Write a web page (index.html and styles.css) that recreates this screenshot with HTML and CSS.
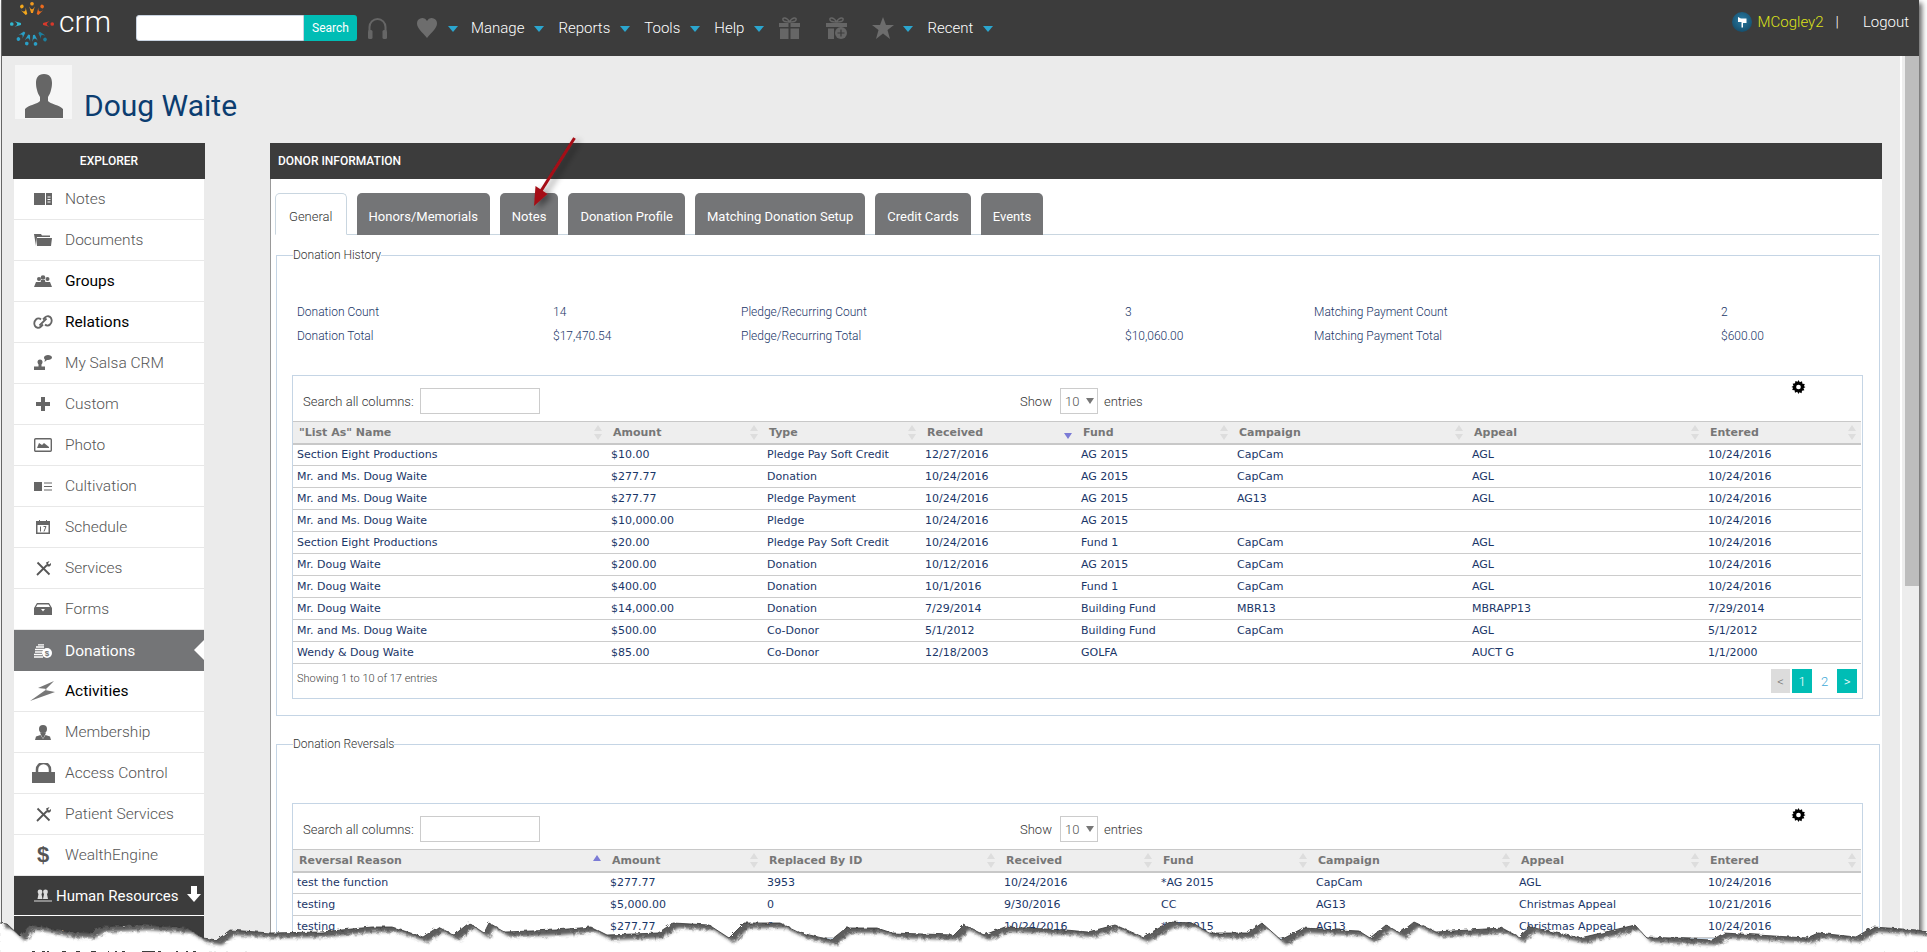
FILE: index.html
```html
<!DOCTYPE html>
<html lang="en">
<head>
<meta charset="utf-8">
<title>Doug Waite - CRM</title>
<link rel="stylesheet" href="styles.css">
</head>
<body>
<div class="window">
  <header class="topbar">
    <div class="logo">
      <svg class="logo-ring" viewBox="-25 -25 50 50" width="50" height="46">
        <g fill="#f5a81c"><g transform="rotate(-30)"><circle cx="0" cy="-22" r="2"/><path d="M-3-19Q0-13 3-19L1-12H-1Z"/></g></g>
        <g fill="#f29a1f"><g transform="rotate(0)"><circle cx="0" cy="-22" r="2"/><path d="M-3-19Q0-13 3-19L1-12H-1Z"/></g></g>
        <g fill="#ea6a1e"><g transform="rotate(30)"><circle cx="0" cy="-22" r="2"/><path d="M-3-19Q0-13 3-19L1-12H-1Z"/></g></g>
        <g fill="#d8392b"><g transform="rotate(90)"><circle cx="0" cy="-22" r="2"/><path d="M-3-19Q0-13 3-19L1-12H-1Z"/></g></g>
        <g fill="#1c7f9e"><g transform="rotate(140)"><circle cx="0" cy="-22" r="2"/><path d="M-3-19Q0-13 3-19L1-12H-1Z"/></g></g>
        <g fill="#2a9fc6"><g transform="rotate(170)"><circle cx="0" cy="-22" r="2"/><path d="M-3-19Q0-13 3-19L1-12H-1Z"/></g></g>
        <g fill="#2a9fc6"><g transform="rotate(195)"><circle cx="0" cy="-22" r="2"/><path d="M-3-19Q0-13 3-19L1-12H-1Z"/></g></g>
        <g fill="#2a9fc6"><g transform="rotate(222)"><circle cx="0" cy="-22" r="2"/><path d="M-3-19Q0-13 3-19L1-12H-1Z"/></g></g>
        <g fill="#33b8d0"><g transform="rotate(270)"><circle cx="0" cy="-22" r="2"/><path d="M-3-19Q0-13 3-19L1-12H-1Z"/></g></g>
      </svg>
      <span class="logo-text">crm</span>
    </div>
    <form class="search">
      <input class="search-input" type="text">
      <button class="search-btn" type="button">Search</button>
    </form>
    <svg class="tb-icon headset" viewBox="0 0 21 24" width="21" height="24"><path d="M2.5 15V11a8 8 0 0 1 16 0v4" fill="none" stroke="#666" stroke-width="2"/><rect x="1" y="14" width="4.5" height="9" rx="1.5" fill="#666"/><rect x="15.5" y="14" width="4.5" height="9" rx="1.5" fill="#666"/></svg>
    <svg class="tb-icon heart" viewBox="0 0 20 20" width="20" height="20"><path d="M10 20C5 14 0 10 0 5.500A5.300 5.300 0 0 1 10 3a5.300 5.300 0 0 1 10 2.500C20 10 15 14 10 20Z" fill="#6d6d6d"/></svg>
    <span class="caret first"></span>
    <a class="nav-link">Manage</a><span class="caret"></span>
    <a class="nav-link">Reports</a><span class="caret"></span>
    <a class="nav-link">Tools</a><span class="caret"></span>
    <a class="nav-link">Help</a><span class="caret"></span>
    <svg class="tb-icon gift" viewBox="0 0 21 22" width="21" height="22"><path d="M10.500 5C8 0 3 0 4 3c.5 1.500 3.500 2 6.500 2Zm0 0C13 0 18 0 17 3c-.5 1.500-3.500 2-6.500 2Z" fill="none" stroke="#666" stroke-width="1.500"/><path d="M0 6h9.500v4H0zM11.500 6H21v4h-9.500zM1 11.500h8.500V22H1zM11.500 11.500H20V22h-8.500z" fill="#666"/></svg>
    <svg class="tb-icon gift2" viewBox="0 0 21 22" width="21" height="22"><path d="M10.500 5C8 0 3 0 4 3c.5 1.500 3.500 2 6.500 2Zm0 0C13 0 18 0 17 3c-.5 1.500-3.500 2-6.500 2Z" fill="none" stroke="#666" stroke-width="1.500"/><path d="M0 6h21v4H0zM2 11.500h6V22H2z" fill="#666"/><circle cx="15" cy="16" r="6" fill="#666"/><path d="M15 12.500v7M11.500 16h7" stroke="#3c3c3c" stroke-width="1.200"/></svg>
    <svg class="tb-icon star" viewBox="0 0 22 22" width="22" height="22"><path d="M11 0l3 8h8l-6.500 5 2.500 9-7-5.500L4 22l2.500-9L0 8h8Z" fill="#6d6d6d"/></svg>
    <span class="caret first-star"></span>
    <a class="nav-link">Recent</a><span class="caret"></span>
    <div class="userbox">
      <svg class="user-badge" viewBox="0 0 20 20" width="20" height="20"><defs><radialGradient id="badge" cx=".5" cy=".4" r=".7"><stop offset="0" stop-color="#2a7ba3"/><stop offset="1" stop-color="#124763"/></radialGradient></defs><circle cx="10" cy="10" r="10" fill="url(#badge)"/><path d="M6 5l3 1.500h5.500V11H11v4.500H9.500V10H6Z" fill="#fff"/></svg>
      <a class="user-name">MCogley2</a>
      <span class="user-sep">|</span>
      <a class="logout">Logout</a>
    </div>
  </header>

  <div class="workspace">
    <div class="page">
      <div class="person">
        <div class="person-photo">
          <svg viewBox="0 0 38 44" width="38" height="44"><path d="M19 0c-6 0-8 4-8 9 0 3 .5 5 1 7 .5 3 2 5 3 7v4c-2 3-12 4-15 8v9h38v-9c-3-4-13-5-15-8v-4c1-2 2.500-4 3-7 .5-2 1-4 1-7 0-5-2-9-8-9Z" fill="#666"/></svg>
        </div>
        <h1 class="person-name">Doug Waite</h1>
      </div>
      <div class="columns">
        <aside class="explorer">
          <div class="explorer-head">EXPLORER</div>
          <ul class="explorer-list">
            <li class="ex-item"><span class="ex-icon"><svg viewBox="0 0 18 12" width="18" height="12"><path d="M0 0h11v12H0zM12 0h6v12h-6z" fill="#666"/><path d="M13.500 4h3M13.500 6.500h3M13.500 9h3" stroke="#fff"/></svg></span>Notes</li>
            <li class="ex-item"><span class="ex-icon"><svg viewBox="0 0 18 12" width="18" height="12"><path d="M0 0h7l1 1.500h8V3H3L2 12Z" fill="#666"/><path d="M3 4h15l-1 8H3Z" fill="#666"/></svg></span>Documents</li>
            <li class="ex-item on"><span class="ex-icon"><svg viewBox="0 0 18 12" width="18" height="12"><g fill="#666"><circle cx="5" cy="4" r="2"/><circle cx="9" cy="2.500" r="2.300"/><circle cx="13.500" cy="4" r="2"/><path d="M0 12l2-5h5l-1 5ZM6 12l1-7h4l1 7ZM12 12l-1-5h5l2 5Z"/></g></svg></span>Groups</li>
            <li class="ex-item on"><span class="ex-icon"><svg viewBox="0 0 20 14" width="20" height="14"><g fill="none" stroke="#666" stroke-width="1.800"><path d="M8 4.500a3.500 3.500 0 0 0-5 0C1 6.500 1 9 2 11s4 2.500 6 .5l2-2"/><path d="M12 9.500a3.500 3.500 0 0 0 5 0c2-2 2-4.500 1-6.500s-4-2.500-6-.5l-2 2"/><path d="M6.500 10.500l7-7"/></g></svg></span>Relations</li>
            <li class="ex-item"><span class="ex-icon"><svg viewBox="0 0 18 16" width="18" height="16"><g fill="#666"><circle cx="6" cy="7" r="2.500"/><path d="M4.500 9h3v2.500H11V15H0v-3.500h4.500Z"/><path d="M10 2.500C10 1 12 0 14 0s4 1 4 2.500S16 5 14 5h-1L10.500 7l.5-2.500c-.7-.4-1-1.200-1-2Z"/></g></svg></span>My Salsa CRM</li>
            <li class="ex-item"><span class="ex-icon"><svg viewBox="0 0 14 14" width="14" height="14"><path d="M5 0h4v5h5v4H9v5H5V9H0V5h5Z" fill="#666"/></svg></span>Custom</li>
            <li class="ex-item"><span class="ex-icon"><svg viewBox="0 0 18 14" width="18" height="14"><rect x=".7" y=".7" width="16.600" height="12.600" rx="1" fill="#fff" stroke="#666" stroke-width="1.400"/><path d="M3 10l2-5 3 2 2-2 5 4v1Z" fill="#666"/></svg></span>Photo</li>
            <li class="ex-item"><span class="ex-icon"><svg viewBox="0 0 18 9" width="18" height="9"><path d="M0 0h8v9H0z" fill="#666"/><path d="M10 1h8M10 4.500h8M10 8h8" stroke="#666"/></svg></span>Cultivation</li>
            <li class="ex-item"><span class="ex-icon"><svg viewBox="0 0 14 14" width="14" height="14"><path d="M0 1h3V0h1v1h6V0h1v1h3v13H0Z" fill="#666"/><rect x="1.500" y="5" width="11" height="7.500" fill="#fff"/><path d="M4.500 6.500v5M7.500 6.500h2.500L8 11.500" fill="none" stroke="#666"/></svg></span>Schedule</li>
            <li class="ex-item"><span class="ex-icon"><svg viewBox="0 0 15 15" width="15" height="15"><g fill="none" stroke="#555" stroke-width="1.800"><path d="M1.500 1.500l12 12"/><path d="M1 14L11 4"/></g><path d="M10 1.500L13.500 0 12 2.500l1 1L15 2c.3 2-1 4-3.500 3.500Z" fill="#555"/></svg></span>Services</li>
            <li class="ex-item"><span class="ex-icon"><svg viewBox="0 0 18 12" width="18" height="12"><path d="M3 0h12l3 5v7H0V5Z" fill="#666"/><path d="M3.500 1.500h11L16 4H2Z" fill="#fff"/><path d="M7 6h4L9 8.500Z" fill="#fff"/></svg></span>Forms</li>
            <li class="ex-item active"><span class="ex-icon"><svg viewBox="0 0 18 14" width="18" height="14"><path d="M0 13h9M0 10.500h8M1 8h8M1 5.500h9M2 3h8M4 .8h6" stroke="#fff" stroke-width="1.300"/><circle cx="13" cy="9" r="5" fill="#fff"/><text x="13" y="12" class="dollar">$</text></svg></span>Donations</li>
            <li class="ex-item on"><span class="ex-icon"><svg viewBox="0 0 26 20" width="26" height="20"><path d="M24 0L8 7l9 1L0 20l25-9-10-2Z" fill="#777"/></svg></span>Activities</li>
            <li class="ex-item"><span class="ex-icon"><svg viewBox="0 0 16 15" width="16" height="15"><circle cx="8" cy="4" r="4" fill="#666"/><path d="M5 7.500h6L10 10l-2 3.500L6 10ZM0 15l1-3.500L5.500 10 8 14l2.500-4 4.500 1.500 1 3.500Z" fill="#666"/></svg></span>Membership</li>
            <li class="ex-item"><span class="ex-icon"><svg viewBox="0 0 23 20" width="23" height="20"><path d="M5 9V6.500a6.500 6.500 0 0 1 13 0V9" fill="none" stroke="#666" stroke-width="2.500"/><rect y="9" width="23" height="11" fill="#666"/></svg></span>Access Control</li>
            <li class="ex-item"><span class="ex-icon"><svg viewBox="0 0 15 15" width="15" height="15"><g fill="none" stroke="#555" stroke-width="1.800"><path d="M1.500 1.500l12 12"/><path d="M1 14L11 4"/></g><path d="M10 1.500L13.500 0 12 2.500l1 1L15 2c.3 2-1 4-3.500 3.500Z" fill="#555"/></svg></span>Patient Services</li>
            <li class="ex-item"><span class="ex-icon ex-dollar">$</span>WealthEngine</li>
            <li class="ex-item dark"><span class="ex-icon-sm"><svg viewBox="0 0 18 13" width="18" height="13"><g fill="#ddd"><circle cx="6" cy="3" r="2.400"/><circle cx="11.500" cy="3" r="2.400"/><path d="M3.500 10l1-5h3l1 5ZM9 10l1-5h3l1 5Z"/><path d="M0 11.500h18v1H0z"/></g></svg></span>Human Resources<svg class="ex-down" viewBox="0 0 14 16" width="14" height="16"><path d="M4 0h6v8h4l-7 8-7-8h4Z" fill="#fff"/></svg></li>
            <li class="ex-item dark"><span class="ex-icon-sm"><svg viewBox="0 0 18 13" width="18" height="13"><rect x="1" width="16" height="10" rx="1" fill="#777"/><path d="M6 12h6" stroke="#777" stroke-width="2"/></svg></span>Reports<svg class="ex-down" viewBox="0 0 14 16" width="14" height="16"><path d="M4 0h6v8h4l-7 8-7-8h4Z" fill="#fff"/></svg></li>
          </ul>
        </aside>

        <section class="panel">
          <div class="panel-head">DONOR INFORMATION</div>
          <div class="panel-body">
            <nav class="tabs">
              <a class="tab current">General</a>
              <a class="tab">Honors/Memorials</a>
              <a class="tab">Notes</a>
              <a class="tab">Donation Profile</a>
              <a class="tab">Matching Donation Setup</a>
              <a class="tab">Credit Cards</a>
              <a class="tab">Events</a>
            </nav>

            <fieldset class="group first-group">
              <legend class="group-title">Donation History</legend>
              <div class="summary">
                <span>Donation Count</span><span>14</span><span>Pledge/Recurring Count</span><span>3</span><span>Matching Payment Count</span><span>2</span>
                <span>Donation Total</span><span>$17,470.54</span><span>Pledge/Recurring Total</span><span>$10,060.00</span><span>Matching Payment Total</span><span>$600.00</span>
              </div>
              <div class="dt">
                <div class="dt-tools">
                  <label class="dt-search">Search all columns:<input class="dt-input" type="text"></label>
                  <div class="dt-length">Show<span class="dt-select">10<i class="dt-select-arrow"></i></span>entries</div>
                  <svg class="dt-gear" viewBox="0 0 16 16" width="15" height="14"><path d="M8 0l1.500 2.500 2.500-1 .5 2.700 2.700.5-1 2.500L16 8l-2.300 1.300 1 2.500-2.700.5-.5 2.700-2.500-1L8 16l-1.500-2.500-2.500 1-.5-2.700-2.700-.5 1-2.500L0 8l2.300-1.300-1-2.500 2.700-.5.500-2.700 2.500 1Z" fill="#000"/><circle cx="8" cy="8" r="2.700" fill="#fff"/></svg>
                </div>
                <table class="dt-table hist">
                  <colgroup><col class="c1"><col class="c2"><col class="c3"><col class="c4"><col class="c5"><col class="c6"><col class="c7"><col class="c8"></colgroup>
                  <thead><tr>
                    <th>"List As" Name<i class="sort"></i></th><th>Amount<i class="sort"></i></th><th>Type<i class="sort"></i></th><th>Received<i class="sort-desc"></i></th><th>Fund<i class="sort"></i></th><th>Campaign<i class="sort"></i></th><th>Appeal<i class="sort"></i></th><th>Entered<i class="sort"></i></th>
                  </tr></thead>
                  <tbody>
                    <tr><td>Section Eight Productions</td><td>$10.00</td><td>Pledge Pay Soft Credit</td><td>12/27/2016</td><td>AG 2015</td><td>CapCam</td><td>AGL</td><td>10/24/2016</td></tr>
                    <tr><td>Mr. and Ms. Doug Waite</td><td>$277.77</td><td>Donation</td><td>10/24/2016</td><td>AG 2015</td><td>CapCam</td><td>AGL</td><td>10/24/2016</td></tr>
                    <tr><td>Mr. and Ms. Doug Waite</td><td>$277.77</td><td>Pledge Payment</td><td>10/24/2016</td><td>AG 2015</td><td>AG13</td><td>AGL</td><td>10/24/2016</td></tr>
                    <tr><td>Mr. and Ms. Doug Waite</td><td>$10,000.00</td><td>Pledge</td><td>10/24/2016</td><td>AG 2015</td><td></td><td></td><td>10/24/2016</td></tr>
                    <tr><td>Section Eight Productions</td><td>$20.00</td><td>Pledge Pay Soft Credit</td><td>10/24/2016</td><td>Fund 1</td><td>CapCam</td><td>AGL</td><td>10/24/2016</td></tr>
                    <tr><td>Mr. Doug Waite</td><td>$200.00</td><td>Donation</td><td>10/12/2016</td><td>AG 2015</td><td>CapCam</td><td>AGL</td><td>10/24/2016</td></tr>
                    <tr><td>Mr. Doug Waite</td><td>$400.00</td><td>Donation</td><td>10/1/2016</td><td>Fund 1</td><td>CapCam</td><td>AGL</td><td>10/24/2016</td></tr>
                    <tr><td>Mr. Doug Waite</td><td>$14,000.00</td><td>Donation</td><td>7/29/2014</td><td>Building Fund</td><td>MBR13</td><td>MBRAPP13</td><td>7/29/2014</td></tr>
                    <tr><td>Mr. and Ms. Doug Waite</td><td>$500.00</td><td>Co-Donor</td><td>5/1/2012</td><td>Building Fund</td><td>CapCam</td><td>AGL</td><td>5/1/2012</td></tr>
                    <tr><td>Wendy &amp; Doug Waite</td><td>$85.00</td><td>Co-Donor</td><td>12/18/2003</td><td>GOLFA</td><td></td><td>AUCT G</td><td>1/1/2000</td></tr>
                  </tbody>
                </table>
                <div class="dt-foot">
                  <span class="dt-info">Showing 1 to 10 of 17 entries</span>
                  <div class="pager"><a class="pg off">&lt;</a><a class="pg cur">1</a><a class="pg plain">2</a><a class="pg cur">&gt;</a></div>
                </div>
              </div>
            </fieldset>

            <fieldset class="group second-group">
              <legend class="group-title">Donation Reversals</legend>
              <div class="dt">
                <div class="dt-tools">
                  <label class="dt-search">Search all columns:<input class="dt-input" type="text"></label>
                  <div class="dt-length">Show<span class="dt-select">10<i class="dt-select-arrow"></i></span>entries</div>
                  <svg class="dt-gear" viewBox="0 0 16 16" width="15" height="14"><path d="M8 0l1.500 2.500 2.500-1 .5 2.700 2.700.5-1 2.500L16 8l-2.300 1.300 1 2.500-2.700.5-.5 2.700-2.500-1L8 16l-1.500-2.500-2.500 1-.5-2.700-2.700-.5 1-2.500L0 8l2.300-1.300-1-2.500 2.700-.5.500-2.700 2.500 1Z" fill="#000"/><circle cx="8" cy="8" r="2.700" fill="#fff"/></svg>
                </div>
                <table class="dt-table rev">
                  <colgroup><col class="c1"><col class="c2"><col class="c3"><col class="c4"><col class="c5"><col class="c6"><col class="c7"><col class="c8"></colgroup>
                  <thead><tr>
                    <th>Reversal Reason<i class="sort-asc"></i></th><th>Amount<i class="sort"></i></th><th>Replaced By ID<i class="sort"></i></th><th>Received<i class="sort"></i></th><th>Fund<i class="sort"></i></th><th>Campaign<i class="sort"></i></th><th>Appeal<i class="sort"></i></th><th>Entered<i class="sort"></i></th>
                  </tr></thead>
                  <tbody>
                    <tr><td>test the function</td><td>$277.77</td><td>3953</td><td>10/24/2016</td><td>*AG 2015</td><td>CapCam</td><td>AGL</td><td>10/24/2016</td></tr>
                    <tr><td>testing</td><td>$5,000.00</td><td>0</td><td>9/30/2016</td><td>CC</td><td>AG13</td><td>Christmas Appeal</td><td>10/21/2016</td></tr>
                    <tr><td>testing</td><td>$277.77</td><td>0</td><td>10/24/2016</td><td>*AG 2015</td><td>AG13</td><td>Christmas Appeal</td><td>10/24/2016</td></tr>
                  </tbody>
                </table>
              </div>
            </fieldset>
          </div>
        </section>
      </div>
    </div>
    <div class="scrollbar"><div class="scroll-thumb"></div></div>
  </div>
</div>

<svg class="callout" viewBox="0 0 1927 952" width="1927" height="952">
  <defs><filter id="arrowShadow" x="-50%" y="-50%" width="200%" height="200%"><feDropShadow dx="4" dy="3" stdDeviation="3" flood-color="#000" flood-opacity=".45"/></filter></defs>
  <g filter="url(#arrowShadow)"><path d="M574.500 138L541 191" stroke="#a50f17" stroke-width="3" fill="none"/><path d="M534 206l1.500-20 12 8Z" fill="#a50f17"/></g>
</svg>

<svg class="torn" viewBox="0 900 1927 52" width="1927" height="52">
  <defs>
    <path id="edge" d="M0 923L7 924L20 936L30 925L44 927L67 932L90 933L100 927L143 925L187 928L203 938L217 940L230 930L270 933L321 932L372 927L392 927L423 937L438 927L454 935L469 923L484 933L489 923L505 932L556 930L591 927L607 935L658 933L673 923L709 925L729 938L744 923L780 923L801 933L831 940L846 928L877 928L892 933L954 935L964 925L984 935L1005 927L1066 930L1088 932L1115 925L1143 937L1170 922L1193 923L1209 933L1248 933L1262 923L1281 940L1303 928L1359 931L1370 938L1386 925L1400 933L1414 922L1436 932L1502 928L1519 937L1530 927L1580 938L1635 925L1646 937L1712 940L1724 933L1807 938L1818 933L1856 937L1873 927L1917 930L1927 932"/>
    <clipPath id="below"><path d="M0 923L7 924L20 936L30 925L44 927L67 932L90 933L100 927L143 925L187 928L203 938L217 940L230 930L270 933L321 932L372 927L392 927L423 937L438 927L454 935L469 923L484 933L489 923L505 932L556 930L591 927L607 935L658 933L673 923L709 925L729 938L744 923L780 923L801 933L831 940L846 928L877 928L892 933L954 935L964 925L984 935L1005 927L1066 930L1088 932L1115 925L1143 937L1170 922L1193 923L1209 933L1248 933L1262 923L1281 940L1303 928L1359 931L1370 938L1386 925L1400 933L1414 922L1436 932L1502 928L1519 937L1530 927L1580 938L1635 925L1646 937L1712 940L1724 933L1807 938L1818 933L1856 937L1873 927L1917 930L1927 932V952H0Z"/></clipPath>
    <filter id="rough" x="0" y="0" width="100%" height="100%"><feTurbulence type="fractalNoise" baseFrequency=".22" numOctaves="2" seed="4"/><feDisplacementMap in="SourceGraphic" scale="4"/></filter>
    <filter id="soft" x="-2%" y="-60%" width="104%" height="220%"><feGaussianBlur stdDeviation="1.800"/></filter>
  </defs>
  <g filter="url(#rough)">
    <rect class="torn-paper" x="0" y="900" width="1927" height="52" clip-path="url(#below)"/>
    <g clip-path="url(#below)">
      <g filter="url(#soft)">
        <path class="torn-shadow" d="M0 923L7 924L20 936L30 925L44 927L67 932L90 933L100 927L143 925L187 928L203 938L217 940L230 930L270 933L321 932L372 927L392 927L423 937L438 927L454 935L469 923L484 933L489 923L505 932L556 930L591 927L607 935L658 933L673 923L709 925L729 938L744 923L780 923L801 933L831 940L846 928L877 928L892 933L954 935L964 925L984 935L1005 927L1066 930L1088 932L1115 925L1143 937L1170 922L1193 923L1209 933L1248 933L1262 923L1281 940L1303 928L1359 931L1370 938L1386 925L1400 933L1414 922L1436 932L1502 928L1519 937L1530 927L1580 938L1635 925L1646 937L1712 940L1724 933L1807 938L1818 933L1856 937L1873 927L1917 930L1927 932V900H0Z" transform="translate(5 5)"/>
      </g>
    </g>
    <use href="#edge" class="torn-line"/>
  </g>
</svg>
</body>
</html>
```
FILE: styles.css
```css
* { box-sizing: border-box; }
html, body { margin: 0; padding: 0; height: 952px; overflow: hidden; background: #fff; }
body { position: relative; font-family: Roboto, "Liberation Sans", sans-serif; }

.window {
  width: 1918px; height: 1100px; margin-left: 1px;
  border-left: 1px solid #666;
  box-shadow: 3px 3px 5px rgba(0,0,0,.6);
  background: #ebebeb;
}

/* top bar */
.topbar { display: flex; align-items: center; height: 56px; background: #3c3c3c; color: #fff; }
.logo { display: flex; width: 134px; align-self: flex-start; flex: none; }
.logo-ring { margin: 1px 0 0 5px; flex: none; }
.logo-text { font-size: 30px; font-weight: 300; line-height: 44px; margin-left: 2px; }
.search { display: flex; height: 26px; margin-top: 0; }
.search-input { width: 168px; height: 26px; border: 1px solid #c9d3e0; border-radius: 3px 0 0 3px; background: #fff; padding: 0; }
.search-btn { width: 53px; height: 26px; border: 0; border-radius: 0 3px 3px 0; background: #00bdb5; color: #fff; font: 400 12px Roboto, sans-serif; padding: 0; }
.tb-icon { flex: none; }
.headset { margin-left: 10px; }
.heart { margin-left: 29px; }
.caret { flex: none; width: 0; height: 0; margin: 2px 14px 0 10px; border: 5px solid transparent; border-top: 6px solid #2ba6cf; border-bottom: 0; }
.caret.first { margin-left: 11px; margin-right: 13px; }
.nav-link { font-size: 15px; font-weight: 300; color: #fff; }
.gift { margin-left: 1px; }
.gift2 { margin-left: 26px; }
.star { margin-left: 25px; }
.caret.first-star { margin-left: 9px; margin-right: 14px; }
.userbox { display: flex; align-items: center; margin-left: auto; align-self: flex-start; padding: 12px 10px 0 0; font-size: 15px; font-weight: 300; }
.user-name { color: #dde21a; margin-left: 6px; }
.user-sep { margin-left: 12px; margin-right: 24px; }
.logout { color: #fff; }

/* work area */
.workspace { display: flex; }
.page { width: 1898px; flex: none; padding: 9px 0 0 11px; }
.scrollbar { flex: none; width: 19px; height: 1000px; padding-left: 5px; background: linear-gradient(90deg, #fff 0, #fff 2px, #ededed 2px); }
.scroll-thumb { width: 14px; height: 530px; background: #bdbdbd; }

.person { display: flex; align-items: flex-end; height: 54px; margin-left: 2px; }
.person-photo { display: flex; justify-content: center; align-items: flex-start; width: 57px; height: 54px; padding-top: 9px; background: #f6f6f6; }
.person-name { margin: 0 0 -5px 12px; font-size: 30px; line-height: 36px; font-weight: 400; color: #0c3d70; white-space: nowrap; }

.columns { display: flex; align-items: flex-start; margin-top: 24px; }

/* explorer */
.explorer { width: 192px; flex: none; }
.explorer-head { height: 36px; line-height: 36px; text-align: center; background: #3c3c3c; color: #fff; font-size: 12px; font-weight: 500; }
.explorer-list { list-style: none; margin: 0 1px; padding: 0; background: #fff; }
.ex-item { position: relative; display: flex; align-items: center; height: 41px; padding-left: 15px; border-bottom: 1px solid #e8e8e8; font-size: 15.500px; font-weight: 300; color: #555; }
.ex-item.on { color: #000; font-weight: 400; }
.ex-icon { display: flex; justify-content: center; align-items: center; width: 28px; margin-right: 8px; flex: none; }
.ex-dollar { font-size: 22px; font-weight: 700; color: #555; font-family: "Liberation Sans", sans-serif; }
.ex-item.active { background: #747577; color: #fff; font-weight: 400; border-bottom: 0; }
.ex-item.active::after { content: ""; position: absolute; right: 0; top: 10px; border: 10px solid transparent; border-right-color: #fff; border-left: 0; }
.dollar { font: 700 8px "Liberation Sans", sans-serif; fill: #747577; text-anchor: middle; }
.ex-item.dark { background: #3c3c3c; color: #fff; font-weight: 400; font-size: 15px; border-bottom: 1px solid #fff; height: 40px; padding-left: 20px; }
.ex-icon-sm { display: flex; width: 18px; margin-right: 4px; flex: none; }
.ex-down { margin-left: 8px; flex: none; margin-top: -4px; }

/* panel */
.panel { width: 1612px; flex: none; margin-left: 65px; background: #fff; }
.panel-head { height: 36px; line-height: 36px; padding-left: 8px; background: #3c3c3c; color: #fff; font-size: 12px; font-weight: 500; }
.panel-body { padding: 14px 3px 0 4px; border-left: 1px solid #999; }
.tabs { display: flex; gap: 10px; height: 42px; border-bottom: 1px solid #c9d6e0; font-size: 13px; font-weight: 300; }
.tab { display: flex; align-items: center; height: 42px; padding: 5px 12px 0; border-radius: 5px 5px 0 0; background: #747577; color: #fff; font-weight: 400; }
.tab.current { background: #fff; color: #333; border: 1px solid #c9d6e0; border-bottom-color: #fff; font-weight: 300; padding: 5px 13px 0; }

.group { margin: 13px 0 0 1px; padding: 0 16px 16px 15px; width: 1604px; border: 1px solid #c5d5e5; min-width: 0; }
.second-group { margin-top: 21px; }
.group-title { margin-left: 1px; padding: 0; font-size: 12px; line-height: 14px; font-weight: 300; color: #333; }
.summary { display: grid; grid-template-columns: 256px 188px 384px 189px 407px 1fr; grid-auto-rows: 24px; align-items: center; margin-top: 38px; padding-left: 5px; font-size: 12px; font-weight: 300; color: #1a3668; }

/* data tables */
.dt { margin-top: 27px; border: 1px solid #c5d5e5; background: #fff; }
.second-group .dt { margin-top: 52px; }
.dt-tools { display: flex; align-items: center; height: 45px; padding-top: 12px; padding-bottom: 7px; font-size: 13px; font-weight: 300; color: #333; }
.dt-search { display: flex; align-items: center; width: 727px; padding-left: 10px; }
.dt-input { width: 120px; height: 26px; margin-left: 6px; border: 1px solid #ccc; background: #fff; padding: 0; }
.dt-length { display: flex; align-items: center; width: 124px; }
.dt-select { display: flex; align-items: center; justify-content: space-between; width: 38px; height: 26px; margin: 0 6px 0 8px; padding: 0 3px 0 4px; border: 1px solid #ccc; color: #555; }
.dt-select-arrow { width: 0; height: 0; border: 4px solid transparent; border-top: 6px solid #777; border-bottom: 0; }
.dt-gear { align-self: flex-start; margin: -8px 56px 0 auto; }

.dt-table { width: 1568px; table-layout: fixed; border-collapse: collapse; font-family: "DejaVu Sans", sans-serif; font-size: 11px; }
.dt-table th { position: relative; height: 22px; padding: 0 6px; text-align: left; background: #eee; color: #777; font-weight: 700; border-top: 1px solid #c8c8c8; border-bottom: 2px solid #c8c8c8; white-space: nowrap; }
.dt-table td { height: 22px; padding: 0 4px; color: #1a3668; border-bottom: 1px solid #ccc; white-space: nowrap; }
.hist .c1 { width: 314px; } .hist .c2 { width: 156px; } .hist .c3 { width: 158px; } .hist .c4 { width: 156px; }
.hist .c5 { width: 156px; } .hist .c6 { width: 235px; } .hist .c7 { width: 236px; } .hist .c8 { width: 157px; }
.rev .c1 { width: 313px; } .rev .c2 { width: 157px; } .rev .c3 { width: 237px; } .rev .c4 { width: 157px; }
.rev .c5 { width: 155px; } .rev .c6 { width: 203px; } .rev .c7 { width: 189px; } .rev .c8 { width: 157px; }

.sort, .sort-asc, .sort-desc { position: absolute; right: 5px; width: 8px; }
.sort { top: 3px; height: 15px; }
.sort::before, .sort::after { content: ""; position: absolute; left: 0; border: 4px solid transparent; }
.sort::before { top: 0; border-bottom: 6px solid #ddd; border-top: 0; }
.sort::after { bottom: 0; border-top: 6px solid #ddd; border-bottom: 0; }
.sort-desc { top: 11px; height: 0; border: 4px solid transparent; border-top: 6px solid #7b7bd6; border-bottom: 0; }
.sort-asc { top: 5px; height: 0; border: 4px solid transparent; border-bottom: 6px solid #7b7bd6; border-top: 0; }

.dt-foot { display: flex; align-items: flex-start; justify-content: space-between; height: 34px; padding: 5px 5px 0 4px; font-weight: 300; }
.dt-info { font-size: 11px; padding-top: 3px; color: #444; }
.pager { display: flex; gap: 2px; font-size: 13px; }
.pg { display: flex; align-items: center; justify-content: center; width: 19px; height: 24px; color: #fff; }
.pg.cur { width: 20px; background: #00bdb5; }
.pg.off { background: #dcdcdc; color: #777; }
.pg.plain { color: #3fa9d8; width: 21px; }

/* screenshot decorations */
.callout { position: absolute; left: 0; top: 0; pointer-events: none; }
.torn { position: absolute; left: 0; top: 900px; pointer-events: none; }
.torn-paper { fill: #fff; }
.torn-shadow { fill: #333; opacity: .8; }
.torn-line { fill: none; stroke: #333; stroke-width: .8; }
```
